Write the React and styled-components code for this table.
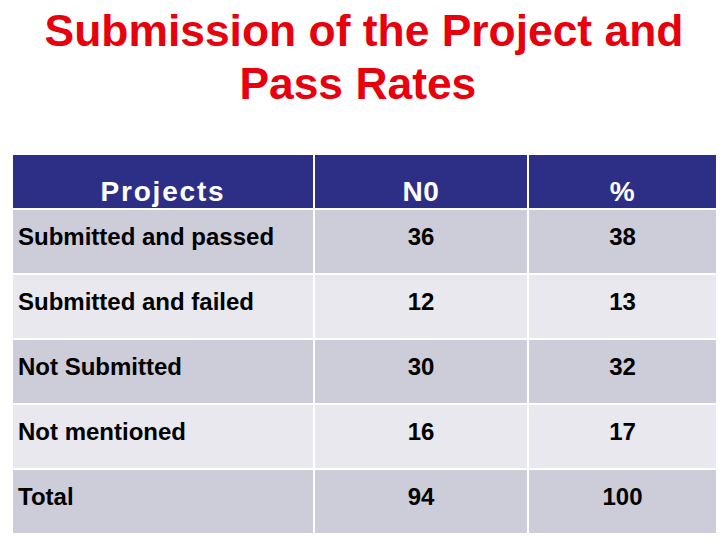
import React from "react";
import styled, { createGlobalStyle } from "styled-components";

const GlobalStyle = createGlobalStyle`
  html, body {
    margin: 0;
    padding: 0;
    background: #ffffff;
  }
  body {
    font-family: "Liberation Sans", Arial, sans-serif;
  }
`;

const Slide = styled.div`
  width: 728px;
  height: 546px;
  background: #ffffff;
  display: flex;
  flex-direction: column;
  overflow: hidden;
`;

const Title = styled.h1`
  margin: 0;
  padding-top: 4px;
  height: 155px;
  flex-shrink: 0;
  box-sizing: border-box;
  text-align: center;
  font-family: "Liberation Sans", Arial, sans-serif;
  font-weight: 700;
  font-size: 44.4px;
  line-height: 53px;
  color: #e8000d;
  white-space: nowrap;
`;

const Table = styled.div`
  margin-left: 13px;
  display: grid;
  grid-template-columns: 300px 212px 187px;
  grid-auto-rows: 63px;
  grid-template-rows: 53px;
  column-gap: 2px;
  row-gap: 2px;
`;

const HeadCell = styled.div`
  background: #2d2f86;
  color: #ffffff;
  font-family: "Liberation Sans", Arial, sans-serif;
  font-weight: 700;
  font-size: 28px;
  line-height: 32px;
  letter-spacing: ${(p) => (p.$spaced ? "1.8px" : "0.6px")};
  text-align: center;
  padding-top: 21px;
  box-sizing: border-box;
`;

const Cell = styled.div`
  background: ${(p) => (p.$alt ? "#e8e8ee" : "#cdcdd9")};
  color: #000000;
  font-family: "Liberation Sans", Arial, sans-serif;
  font-weight: 700;
  font-size: 24px;
  line-height: 28px;
  text-align: ${(p) => (p.$label ? "left" : "center")};
  padding: 13px 0 0 ${(p) => (p.$label ? "5px" : "0")};
  box-sizing: border-box;
  white-space: nowrap;
`;

const rows = [
  ["Submitted and passed", "36", "38"],
  ["Submitted and failed", "12", "13"],
  ["Not Submitted", "30", "32"],
  ["Not mentioned", "16", "17"],
  ["Total", "94", "100"],
];

export default function App() {
  return (
    <>
      <GlobalStyle />
      <Slide>
        <Title>
          Submission of the Project and
          <br />
          Pass Rates&nbsp;
        </Title>
        <Table>
          <HeadCell $spaced>Projects</HeadCell>
          <HeadCell>N0</HeadCell>
          <HeadCell>%</HeadCell>
          {rows.map((r, i) => (
            <React.Fragment key={r[0]}>
              <Cell $label $alt={i % 2 === 1}>{r[0]}</Cell>
              <Cell $alt={i % 2 === 1}>{r[1]}</Cell>
              <Cell $alt={i % 2 === 1}>{r[2]}</Cell>
            </React.Fragment>
          ))}
        </Table>
      </Slide>
    </>
  );
}
